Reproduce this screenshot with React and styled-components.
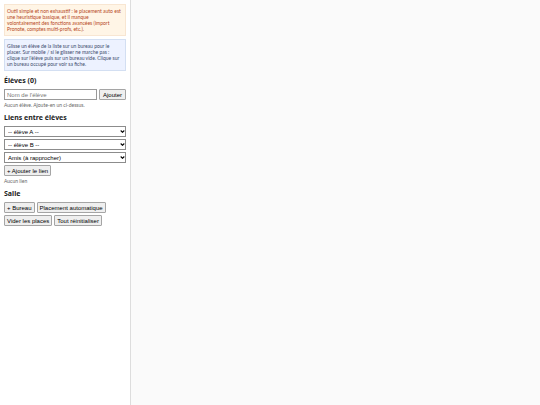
import React from "react";
import styled, { createGlobalStyle } from "styled-components";

const GlobalStyle = createGlobalStyle`
  *, *::before, *::after { box-sizing: border-box; }
  body {
    margin: 0;
    background: #fafafa;
    color: #222;
    font-family: Lato, "Noto Sans", sans-serif;
    font-size: 5px;
    line-height: 6px;
  }
`;

const Layout = styled.div`
  display: flex;
  min-height: 100vh;
`;

const Sidebar = styled.aside`
  flex: 0 0 131px;
  padding: 4px;
  background: #fff;
  border-right: 1px solid #ddd;
`;

const Room = styled.main`
  flex: 1;
  background: #fafafa;
`;

const tones = {
  warning: { bg: "#fff5e6", line: "#f8e6d2", ink: "#b5451b" },
  info: { bg: "#edf2ff", line: "#d3dff2", ink: "#3c4a6b" },
};

const Notice = styled.p`
  margin: 0 0 3px;
  padding: 3px 2px;
  border: 1px solid ${({ $tone }) => tones[$tone].line};
  background: ${({ $tone }) => tones[$tone].bg};
  color: ${({ $tone }) => tones[$tone].ink};
`;

const Section = styled.section`
  display: flex;
  flex-direction: column;
  align-items: flex-start;
  gap: 2px;
  margin-top: 5px;
`;

const Title = styled.h2`
  margin: 0 0 2px;
  font-family: "Noto Sans", sans-serif;
  font-size: 7px;
  line-height: 9px;
  font-weight: 700;
`;

const Row = styled.div`
  display: flex;
  flex-wrap: wrap;
  gap: 2px;
  width: 100%;
`;

const Field = styled.input`
  flex: 1;
  min-width: 0;
  height: 11px;
  padding: 0 2px;
  border: 1px solid #999;
  border-radius: 0;
  background: #fff;
  font-family: "Liberation Sans", Arial, sans-serif;
  font-size: 6px;
  &::placeholder { color: #757575; }
`;

const Button = styled.button`
  height: 11px;
  min-width: 27px;
  padding: 0 2px;
  border: 1px solid #a5a5a5;
  border-radius: 1px;
  background: #efefef;
  color: #000;
  font-family: "Liberation Sans", Arial, sans-serif;
  font-size: 6px;
  line-height: 8px;
  white-space: nowrap;
`;

const SelectWrap = styled.div`
  display: grid;
  width: 100%;
  align-items: center;
  & > * { grid-area: 1 / 1; }
`;

const Select = styled.select`
  appearance: none;
  width: 100%;
  height: 11px;
  padding: 0 8px 0 3px;
  border: 1px solid #8c8c8c;
  border-radius: 0;
  background: #fff;
  color: #000;
  font-family: "Liberation Sans", Arial, sans-serif;
  font-size: 6px;
`;

const Chevron = styled.svg`
  justify-self: end;
  width: 5px;
  height: 3px;
  margin-right: 1px;
  pointer-events: none;
`;

const Hint = styled.p`
  margin: 0;
  color: #666;
`;

function Dropdown({ label, options }) {
  return (
    <SelectWrap>
      <Select aria-label={label}>
        {options.map((option) => (
          <option key={option}>{option}</option>
        ))}
      </Select>
      <Chevron viewBox="0 0 5 3" aria-hidden="true">
        <path d="M.7.5 2.5 2.3 4.3.5" fill="none" stroke="#000" strokeWidth="1.1" />
      </Chevron>
    </SelectWrap>
  );
}

export default function App() {
  return (
    <>
      <GlobalStyle />
      <Layout>
        <Sidebar>
          <Notice $tone="warning">
            Outil simple et non exhaustif : le placement auto est<br />
            une heuristique basique, et il manque<br />
            volontairement des fonctions avancées (import<br />
            Pronote, comptes multi-profs, etc.).
          </Notice>
          <Notice $tone="info">
            Glisse un élève de la liste sur un bureau pour le<br />
            placer. Sur mobile / si le glisser ne marche pas :<br />
            clique sur l'élève puis sur un bureau vide. Clique sur<br />
            un bureau occupé pour voir sa fiche.
          </Notice>
          <Section>
            <Title>Élèves (0)</Title>
            <Row>
              <Field aria-label="Nom de l'élève" placeholder="Nom de l'élève" />
              <Button type="button">Ajouter</Button>
            </Row>
            <Hint>Aucun élève. Ajoute-en un ci-dessus.</Hint>
          </Section>
          <Section>
            <Title>Liens entre élèves</Title>
            <Dropdown label="Premier élève" options={["-- élève A --"]} />
            <Dropdown label="Second élève" options={["-- élève B --"]} />
            <Dropdown label="Type de lien" options={["Amis (à rapprocher)"]} />
            <Button type="button">+ Ajouter le lien</Button>
            <Hint>Aucun lien</Hint>
          </Section>
          <Section>
            <Title>Salle</Title>
            <Row>
              <Button type="button">+ Bureau</Button>
              <Button type="button">Placement automatique</Button>
              <Button type="button">Vider les places</Button>
              <Button type="button">Tout réinitialiser</Button>
            </Row>
          </Section>
        </Sidebar>
        <Room aria-label="Plan de la salle" />
      </Layout>
    </>
  );
}
